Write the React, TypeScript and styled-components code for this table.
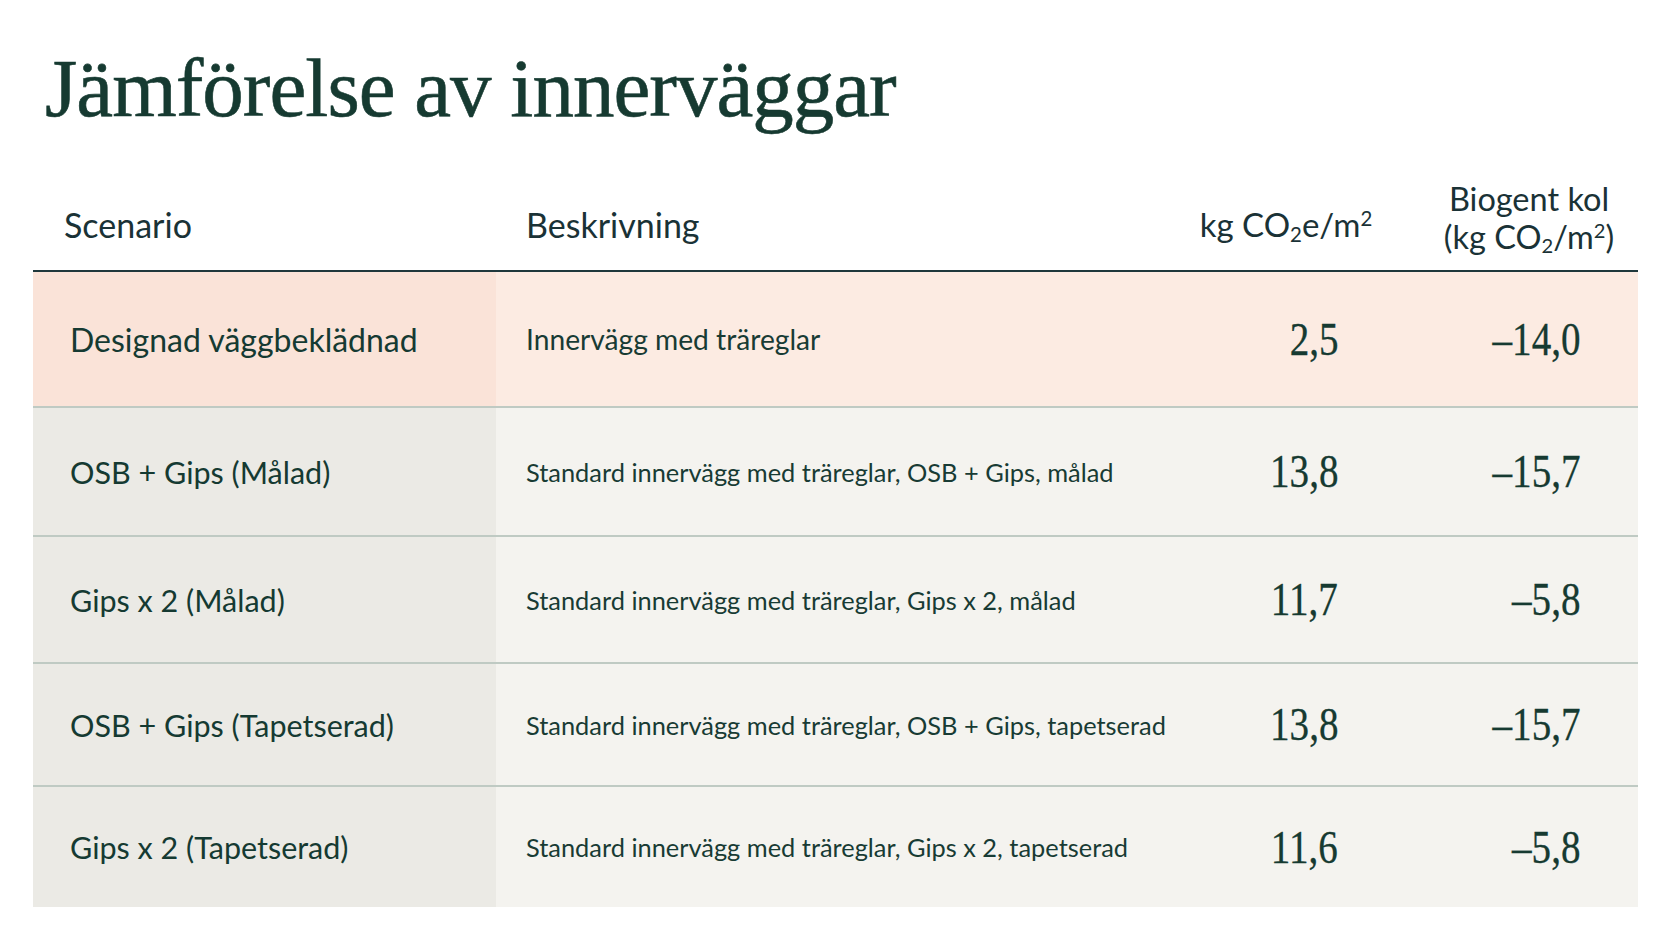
import React from "react";
import styled, { createGlobalStyle } from "styled-components";

const Global = createGlobalStyle`
  html, body { margin: 0; padding: 0; background: #ffffff; }
  body { font-family: Lato, "Noto Sans", sans-serif; color: #173b33; }
`;

const Page = styled.main`
  width: 1672px;
  height: 941px;
  box-sizing: border-box;
  padding: 47px 34px 0 33px;
  overflow: hidden;
`;

const Title = styled.h1`
  margin: 0 0 0 12px;
  font-family: "Liberation Serif", "Times New Roman", serif;
  font-weight: 400;
  font-size: 83px;
  line-height: 1;
  letter-spacing: -1px;
  color: #163a31;
  -webkit-text-stroke: 0.6px #163a31;
`;

const cols = "463px 664px 240px 238px";

const HeaderRow = styled.div`
  display: grid;
  grid-template-columns: ${cols};
  align-items: end;
  height: 140px;
  border-bottom: 2.5px solid #1f383c;
  color: #1a3236;
`;

const HeadCell = styled.div<{ $align?: string; $pl?: number; $pb?: number; $fs?: number }>`
  font-size: ${(p) => p.$fs ?? 34}px;
  line-height: 1.15;
  white-space: nowrap;
  text-align: ${(p) => p.$align || "left"};
  padding-left: ${(p) => p.$pl ?? 0}px;
  padding-bottom: ${(p) => p.$pb ?? 26}px;
`;

const Sub = styled.sub`
  font-size: 0.62em;
  vertical-align: -0.22em;
  line-height: 0;
`;

const Sup = styled.sup`
  font-size: 0.62em;
  vertical-align: 0.55em;
  line-height: 0;
`;

const Row = styled.div<{ $h: number; $hl?: boolean; $last?: boolean }>`
  display: grid;
  grid-template-columns: ${cols};
  height: ${(p) => p.$h}px;
  box-sizing: border-box;
  border-bottom: ${(p) => (p.$last ? "none" : "2px solid #bfcac3")};
  background: ${(p) => (p.$hl ? "#fcebe2" : "#f4f3ef")};
`;

const NameCell = styled.div<{ $hl?: boolean }>`
  display: flex;
  align-items: center;
  padding-left: 37px;
  white-space: nowrap;
  background: ${(p) => (p.$hl ? "#fae3d8" : "#ebeae5")};
  font-size: ${(p) => (p.$hl ? 32 : 30.5)}px;
  color: #153a32;
`;

const DescCell = styled.div<{ $hl?: boolean }>`
  display: flex;
  align-items: center;
  padding-left: 30px;
  white-space: nowrap;
  font-size: ${(p) => (p.$hl ? 28.2 : 25.4)}px;
  color: #183b34;
`;

const NumCell = styled.div<{ $pr: number }>`
  display: flex;
  align-items: center;
  justify-content: flex-end;
  padding-right: ${(p) => p.$pr}px;
  font-family: "Liberation Serif", "Times New Roman", serif;
  font-size: 46px;
  color: #163a31;
  -webkit-text-stroke: 0.3px #163a31;
`;

const Narrow = styled.span`
  display: inline-block;
  transform: scaleX(0.85);
  transform-origin: right center;
  white-space: nowrap;
`;

const rows = [
  { name: "Designad väggbeklädnad", desc: "Innervägg med träreglar", co2: "2,5", bio: "–14,0", h: 136, hl: true },
  { name: "OSB + Gips (Målad)", desc: "Standard innervägg med träreglar, OSB + Gips, målad", co2: "13,8", bio: "–15,7", h: 129 },
  { name: "Gips x 2 (Målad)", desc: "Standard innervägg med träreglar, Gips x 2, målad", co2: "11,7", bio: "–5,8", h: 127 },
  { name: "OSB + Gips (Tapetserad)", desc: "Standard innervägg med träreglar, OSB + Gips, tapetserad", co2: "13,8", bio: "–15,7", h: 123 },
  { name: "Gips x 2 (Tapetserad)", desc: "Standard innervägg med träreglar, Gips x 2, tapetserad", co2: "11,6", bio: "–5,8", h: 120 },
];

export default function App() {
  return (
    <Page>
      <Global />
      <Title>Jämförelse av innerväggar</Title>
      <HeaderRow>
        <HeadCell $pl={31}>Scenario</HeadCell>
        <HeadCell $pl={30}>Beskrivning</HeadCell>
        <HeadCell $align="center" $pl={12} $fs={33}>
          kg CO<Sub>2</Sub>e/m<Sup>2</Sup>
        </HeadCell>
        <HeadCell $align="center" $pl={20} $pb={15} $fs={32.5}>
          Biogent kol
          <br />
          (kg CO<Sub>2</Sub>/m<Sup>2</Sup>)
        </HeadCell>
      </HeaderRow>
      {rows.map((r, i) => (
        <Row key={i} $h={r.h} $hl={r.hl} $last={i === rows.length - 1}>
          <NameCell $hl={r.hl}>{r.name}</NameCell>
          <DescCell $hl={r.hl}>{r.desc}</DescCell>
          <NumCell $pr={62}>
            <Narrow>{r.co2}</Narrow>
          </NumCell>
          <NumCell $pr={58}>
            <Narrow>{r.bio}</Narrow>
          </NumCell>
        </Row>
      ))}
    </Page>
  );
}
